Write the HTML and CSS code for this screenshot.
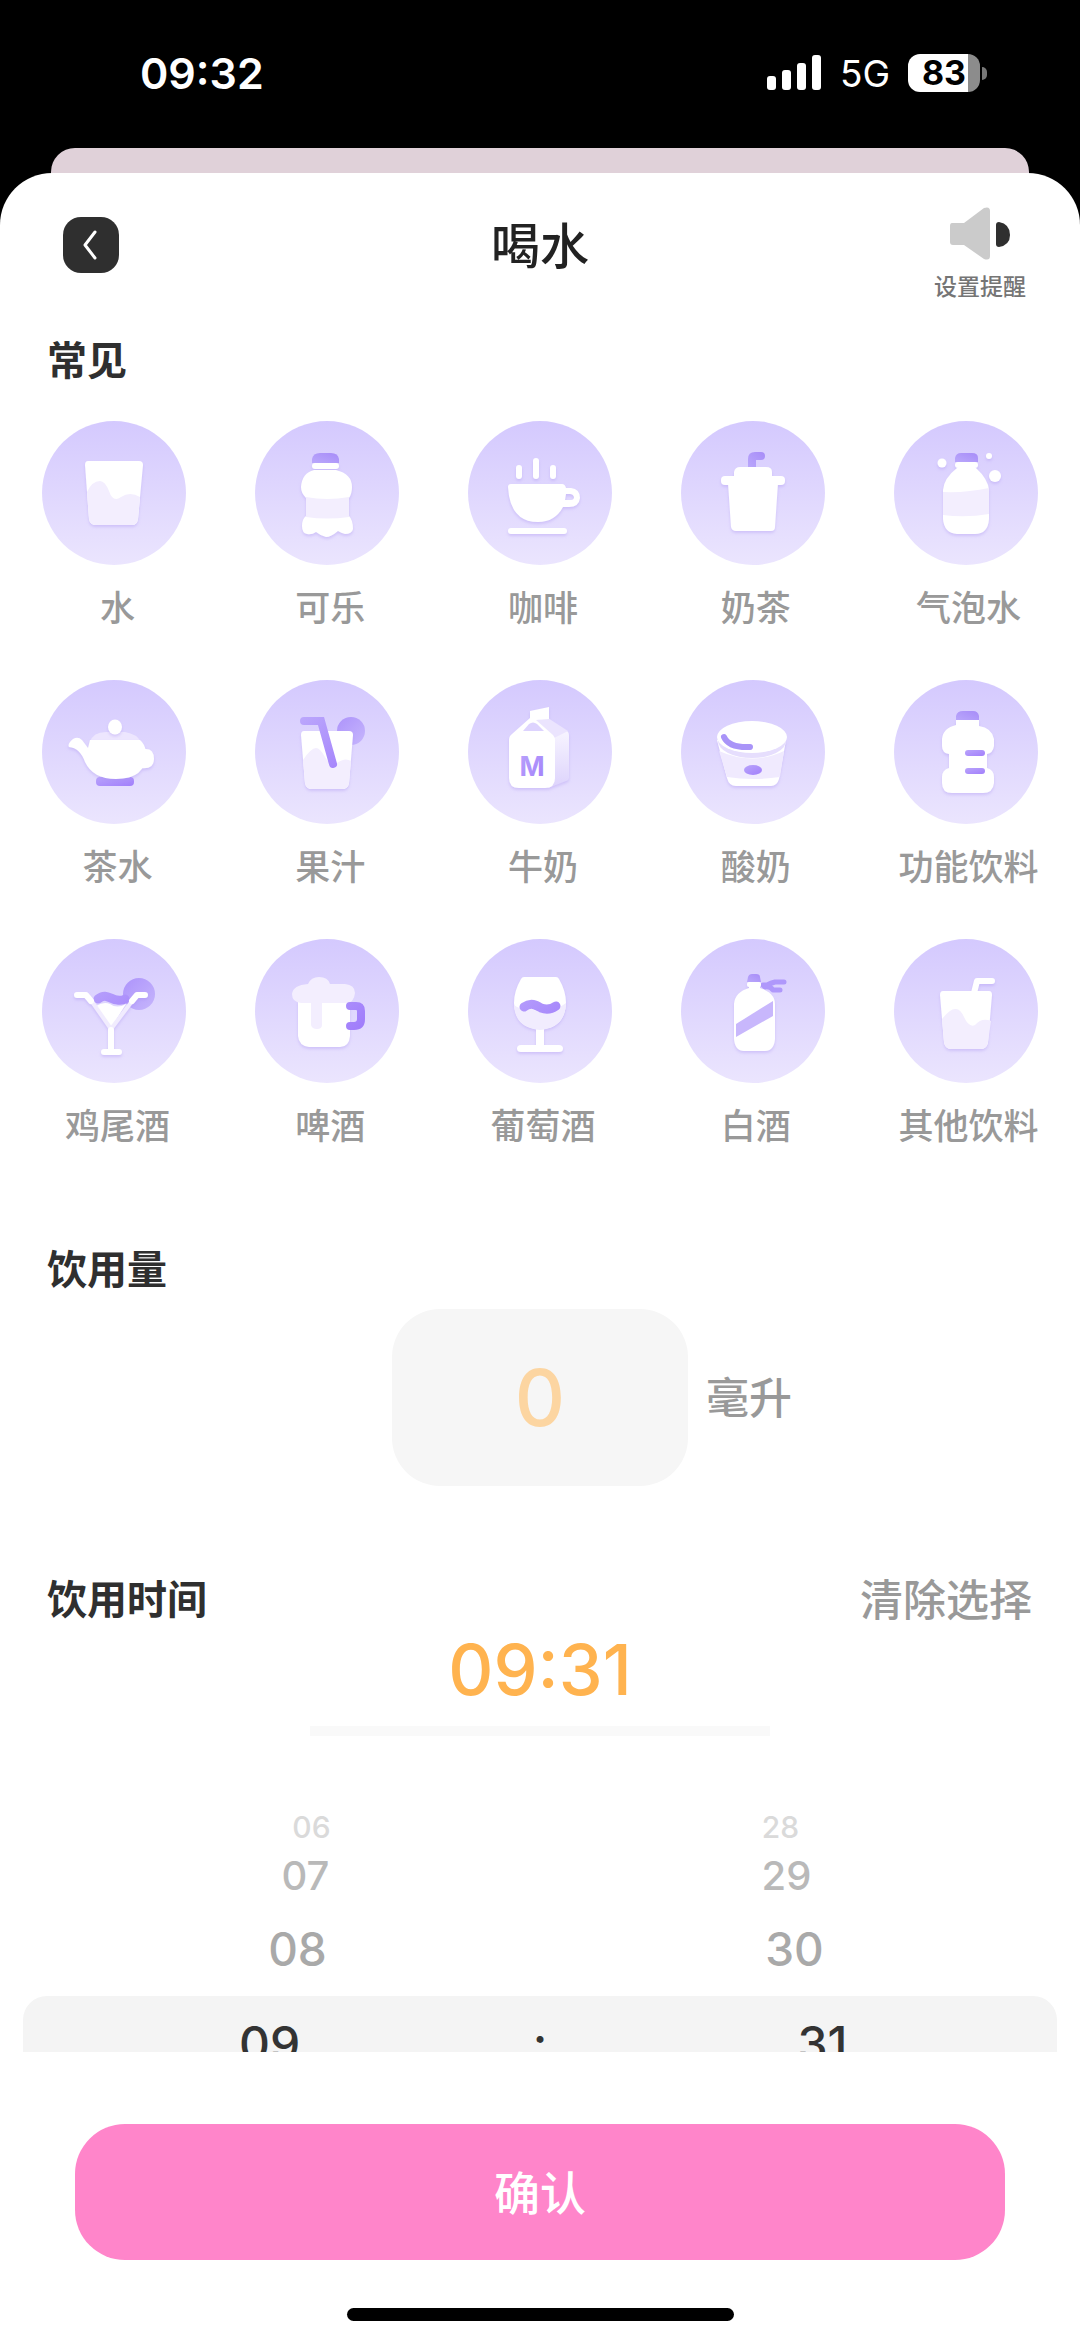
FILE: index.html
```html
<!DOCTYPE html>
<html lang="zh-CN">
<head>
<meta charset="utf-8">
<meta name="viewport" content="width=device-width, initial-scale=1">
<title>喝水</title>
<link rel="stylesheet" href="styles.css">
</head>
<body>
<svg class="defs" width="0" height="0" aria-hidden="true">
  <defs>
    <linearGradient id="accent" x1="0" y1="0" x2="1" y2="1"><stop offset="0" stop-color="#b9a4fb"/><stop offset="1" stop-color="#a27ffb"/></linearGradient>
    <linearGradient id="capfill" x1="1" y1="0" x2="0" y2="1"><stop offset="0" stop-color="#a78cf8"/><stop offset="1" stop-color="#baa8fb"/></linearGradient>
    <linearGradient id="accentline" gradientUnits="userSpaceOnUse" x1="40" y1="35" x2="100" y2="100"><stop offset="0" stop-color="#bdaafc"/><stop offset="1" stop-color="#9f7bfb"/></linearGradient>
    <linearGradient id="slice" x1="0" y1="0" x2="1" y2="1"><stop offset="0" stop-color="#ad93fb"/><stop offset="1" stop-color="#c6b6fc"/></linearGradient>
    <linearGradient id="side" x1="0" y1="0" x2="0" y2="1"><stop offset="0" stop-color="#f7f4ff"/><stop offset="1" stop-color="#ddd3fc"/></linearGradient>
    <filter id="shade" x="-20%" y="-20%" width="140%" height="150%"><feDropShadow dx="0" dy="2" stdDeviation="1.5" flood-color="#a58ff0" flood-opacity=".35"/></filter>
  </defs>
</svg>

<div class="status">
  <time class="status-time">09:32</time>
  <div class="status-right">
    <svg width="55" height="36" viewBox="0 0 55 36" fill="#fff" aria-hidden="true"><rect y="21" width="9" height="14" rx="3"/><rect x="15" y="15" width="9" height="20" rx="3"/><rect x="30" y="8" width="9" height="27" rx="3"/><rect x="45" y="0" width="9" height="35" rx="3"/></svg>
    <span class="network">5G</span>
    <span class="battery"><span class="battery-body">83</span><span class="battery-tip"></span></span>
  </div>
</div>
<div class="behind"></div>

<div class="sheet">
  <header class="header">
    <button class="back" type="button" aria-label="返回">
      <svg width="56" height="56" viewBox="0 0 56 56" fill="none" stroke="#fff" stroke-width="3" stroke-linecap="round" stroke-linejoin="round" aria-hidden="true"><path d="M32 15 L22 28 L32 41"/></svg>
    </button>
    <h1 class="title">喝水</h1>
    <button class="remind" type="button">
      <svg width="62" height="54" viewBox="0 0 62 54" aria-hidden="true"><path fill="#cbcbcb" d="M3 16H15L35 1Q41-1 41 4V49Q41 54 35 52L15 38H4Q1 38 1 35V19Q1 16 3 16Z"/><path fill="#2f2f2f" d="M47 18Q47 15 50 15Q61 17 61 28Q61 38 50 40Q47 40 47 37Z"/></svg>
      <span>设置提醒</span>
    </button>
  </header>

  <main class="content">
    <h2 class="section-title">常见</h2>
    <div class="drinks">
      <button class="drink" type="button">
        <svg class="drink-icon" viewBox="0 0 144 144" aria-hidden="true"><g filter="url(#shade)"><path fill="#fff" d="M46 40H97Q101 40 101 44L96 98Q95 104 90 104H54Q48 104 47 98L43 44Q43 40 46 40Z"/></g><path fill="#f3eefe" d="M45 71Q50 60 58 60Q63 60 67 70Q71 82 79 76Q88 70 98 76L96 98Q95 104 90 104H54Q48 104 47 98Z"/></svg>
        <span>水</span>
      </button>
      <button class="drink" type="button">
        <svg class="drink-icon" viewBox="0 0 144 144" aria-hidden="true"><path fill="url(#capfill)" d="M57 42V38Q58 32 65 32H76Q83 32 84 38V42Z"/><g filter="url(#shade)"><rect x="57" y="42" width="27" height="6" rx="3" fill="#fff"/><path fill="#fff" d="M59 49H81Q97 53 97 66Q97 73 94 77V95Q98 99 98 108Q97 113 90 113Q86 112 83 110Q76 116 71 116Q66 115 61 111Q57 114 52 113Q47 112 47 105Q47 98 51 95V77Q46 72 46 66Q47 52 59 49Z"/></g><path fill="#f3eefe" d="M51 76Q72 80 94 76V96Q72 99 51 96Z"/></svg>
        <span>可乐</span>
      </button>
      <button class="drink" type="button">
        <svg class="drink-icon" viewBox="0 0 144 144" aria-hidden="true"><g fill="#fff" filter="url(#shade)"><rect x="48" y="44" width="6" height="14" rx="3"/><rect x="65" y="37" width="6" height="21" rx="3"/><rect x="82" y="44" width="6" height="14" rx="3"/><path fill-rule="evenodd" d="M43 63H94Q97 63 98 67H103Q112 68 112 77Q111 86 101 86H95Q87 101 70 101Q42 101 40 66Q40 63 43 63ZM98 73L97 79H103Q106 79 106 76Q105 73 102 73Z"/><rect x="40" y="107" width="59" height="6" rx="3"/></g></svg>
        <span>咖啡</span>
      </button>
      <button class="drink" type="button">
        <svg class="drink-icon" viewBox="0 0 144 144" aria-hidden="true"><path fill="url(#capfill)" d="M67 47V38Q67 31 74 31H80Q84 31 84 35Q84 39 80 39H75V47Z"/><g fill="#fff" filter="url(#shade)"><path d="M47 62H97L94 106Q94 110 90 110H55Q51 110 50 106Z"/><path d="M53 58V51Q54 46 59 46H85Q91 46 91 51V58Z"/><rect x="40" y="55" width="64" height="9" rx="4"/></g></svg>
        <span>奶茶</span>
      </button>
      <button class="drink" type="button">
        <svg class="drink-icon" viewBox="0 0 144 144" aria-hidden="true"><path fill="url(#capfill)" d="M61 41V37Q62 32 67 32H78Q84 32 84 37V41Z"/><g fill="#fff" filter="url(#shade)"><rect x="61" y="41" width="23" height="6" rx="3"/><path d="M63 47H82Q94 58 95 69V98Q94 113 81 113H63Q50 112 49 98V69Q50 57 63 47Z"/><circle cx="48" cy="42" r="4.500"/><circle cx="95" cy="35" r="3"/><circle cx="101" cy="55" r="6"/></g><path fill="#f3eefe" d="M49 71Q72 72 95 67V93Q72 97 49 94Z"/></svg>
        <span>气泡水</span>
      </button>

      <button class="drink" type="button">
        <svg class="drink-icon" viewBox="0 0 144 144" aria-hidden="true"><rect x="54" y="97" width="38" height="9" rx="4" fill="url(#accent)"/><path fill="#ede6fe" d="M48 62Q51 52 64 52H83Q95 54 99 62Z"/><g fill="#fff" filter="url(#shade)"><ellipse cx="73" cy="47" rx="7" ry="7.500"/><path d="M98 70Q112 66 112 79Q112 90 98 88Z"/><path d="M48 60H98Q103 64 104 72Q105 99 74 99Q51 99 43 82Q38 68 27 67Q25 64 31 59Q36 56 40 60L46 68Z"/></g></svg>
        <span>茶水</span>
      </button>
      <button class="drink" type="button">
        <svg class="drink-icon" viewBox="0 0 144 144" aria-hidden="true"><circle cx="96" cy="51" r="14" fill="url(#slice)"/><g filter="url(#shade)"><path fill="#fff" d="M49 51H94Q98 51 98 55L94 103Q93 109 87 109H57Q51 109 50 103L46 55Q46 51 49 51Z"/></g><path fill="#f3eefe" d="M48 80Q56 68 61 68Q65 68 70 77Q76 87 82 83Q90 77 96 81L94 103Q93 109 87 109H57Q51 109 50 103Z"/><path fill="none" stroke="url(#accentline)" stroke-width="8" stroke-linecap="round" d="M49 41H66L78 84"/></svg>
        <span>果汁</span>
      </button>
      <button class="drink" type="button">
        <svg class="drink-icon" viewBox="0 0 144 144" aria-hidden="true"><g filter="url(#shade)"><path fill="url(#side)" d="M82 54L99 51Q101 52 101 56V97Q101 100 98 101L80 108Z"/><path fill="#ebe4fe" d="M65 40L80 38L100 51L86 58Z"/><path fill="#fff" d="M62 31L81 27V39L68 40L85 55Q87 57 87 61V98Q87 108 77 108H51Q41 108 41 98V60Q41 56 44 54L62 38Z"/></g><path fill="#ddd3fe" d="M55 51L61 44Q65 41 69 44L76 51Z"/><text x="64" y="96" text-anchor="middle" class="carton-mark">M</text></svg>
        <span>牛奶</span>
      </button>
      <button class="drink" type="button">
        <svg class="drink-icon" viewBox="0 0 144 144" aria-hidden="true"><g filter="url(#shade)"><path fill="#fff" d="M36 60L46 98Q48 106 55 106H90Q96 106 98 99L105 60Z"/></g><path fill="#f0eafe" d="M38 71Q72 86 103 71L99 97Q72 101 46 97Z"/><ellipse cx="71" cy="61" rx="34" ry="17" fill="#e6defd"/><ellipse cx="71" cy="57" rx="35" ry="16" fill="#fff"/><path fill="none" stroke="#a994f8" stroke-width="6" stroke-linecap="round" d="M43 57Q48 68 69 67"/><ellipse cx="72" cy="90" rx="9" ry="5" fill="url(#accent)"/></svg>
        <span>酸奶</span>
      </button>
      <button class="drink" type="button">
        <svg class="drink-icon" viewBox="0 0 144 144" aria-hidden="true"><path fill="url(#capfill)" d="M62 41V36Q63 31 69 31H79Q84 31 85 36V41Z"/><g fill="#fff" filter="url(#shade)"><path d="M62 40H85V46Q98 48 100 59V66Q99 73 93 74V88Q100 90 100 97V103Q99 113 89 113H58Q48 113 48 103V97Q48 90 55 88V74Q48 73 48 66V59Q49 48 62 45Z"/></g><rect x="71" y="70" width="20" height="6" rx="3" fill="url(#accent)"/><rect x="71" y="88" width="20" height="6" rx="3" fill="url(#accent)"/></svg>
        <span>功能饮料</span>
      </button>

      <button class="drink" type="button">
        <svg class="drink-icon" viewBox="0 0 144 144" aria-hidden="true"><circle cx="97" cy="55" r="16" fill="url(#slice)"/><path fill="none" stroke="url(#accentline)" stroke-width="9" stroke-linecap="round" d="M56 60C64 53 69 61 75 61Q80 62 83 60"/><g filter="url(#shade)"><path fill="#fff" d="M54 67Q62 62 68 65Q75 70 84 65L69 89Z"/><path fill="none" stroke="#f1ecfe" stroke-width="4" d="M46 57L69 90L94 57"/><path fill="none" stroke="#fff" stroke-width="6" stroke-linecap="round" stroke-linejoin="round" d="M35 56H44L49 62M90 62L95 56H103M69 91V111M62 113H77"/></g></svg>
        <span>鸡尾酒</span>
      </button>
      <button class="drink" type="button">
        <svg class="drink-icon" viewBox="0 0 144 144" aria-hidden="true"><g filter="url(#shade)"><path fill="#fff" d="M43 62H95V97Q94 108 85 108H54Q44 107 43 97Z"/></g><path fill="#f3eefe" d="M53 45Q56 38 64 38Q73 38 75 45H90Q100 46 100 54Q99 64 91 64H67V86Q67 90 62 90Q57 90 56 86V64H46Q37 63 37 55Q38 46 53 45Z"/><path fill="none" stroke="url(#accentline)" stroke-width="8" stroke-linecap="round" stroke-linejoin="round" d="M95 67H101Q106 67 106 72V80Q106 87 99 87H95"/></svg>
        <span>啤酒</span>
      </button>
      <button class="drink" type="button">
        <svg class="drink-icon" viewBox="0 0 144 144" aria-hidden="true"><g filter="url(#shade)"><path fill="#fff" d="M56 38H88Q90 38 91 40Q98 52 98 64Q97 87 76 90V106H91Q95 106 95 109.500Q95 113 91 113H53Q49 113 49 109.500Q49 106 53 106H68V90Q47 87 46 64Q46 52 53 40Q54 38 56 38Z"/></g><path fill="#f1ecfe" d="M46 66Q54 72 63 69Q77 80 98 64Q97 89 72 91Q47 89 46 66Z"/><path fill="none" stroke="url(#accentline)" stroke-width="9" stroke-linecap="round" d="M56 68C63 63 68 66 73 69Q81 72 88 67"/></svg>
        <span>葡萄酒</span>
      </button>
      <button class="drink" type="button">
        <svg class="drink-icon" viewBox="0 0 144 144" aria-hidden="true"><path fill="none" stroke="#af98fb" stroke-width="5" stroke-linecap="round" stroke-linejoin="round" d="M103 43H94Q90 44 86 46L82 46L84 48Q89 47 92 51H99"/><path fill="url(#capfill)" d="M66 43L67 38Q68 35 71 35H75Q79 35 79 38L80 43Z"/><g fill="#fff" filter="url(#shade)"><rect x="66" y="43" width="14" height="5" rx="2"/><path d="M68 47H79V49Q94 54 94 65V100Q93 112 84 112H63Q54 112 53 100V65Q54 53 68 49Z"/></g><path fill="#c8b7fc" d="M55 85L92 62V77L55 98Z"/></svg>
        <span>白酒</span>
      </button>
      <button class="drink" type="button">
        <svg class="drink-icon" viewBox="0 0 144 144" aria-hidden="true"><g filter="url(#shade)"><path fill="none" stroke="#fff" stroke-width="6" stroke-linecap="round" stroke-linejoin="round" d="M80 54L83 42H98"/><path fill="#fff" d="M49 52H95Q98 52 98 56L94 103Q93 110 87 110H57Q51 110 50 103L46 56Q46 52 49 52Z"/></g><path fill="#f3eefe" d="M48 80Q56 70 61 70Q66 69 70 78Q75 89 81 86Q88 78 97 82L94 103Q93 110 87 110H57Q51 110 50 103Z"/></svg>
        <span>其他饮料</span>
      </button>
    </div>

    <h2 class="section-title amount-title"><label for="amount">饮用量</label></h2>
    <div class="amount">
      <input id="amount" class="amount-input" type="text" inputmode="numeric" placeholder="0">
      <span class="unit">毫升</span>
    </div>

    <div class="time-head">
      <h2 class="section-title">饮用时间</h2>
      <button class="clear" type="button">清除选择</button>
    </div>
    <div class="chosen"><time class="chosen-time">09:31</time></div>

    <div class="wheel">
      <div class="wheel-row far"><span class="hour">06</span><span class="minute">28</span></div>
      <div class="wheel-row mid"><span class="hour">07</span><span class="minute">29</span></div>
      <div class="wheel-row near"><span class="hour">08</span><span class="minute">30</span></div>
      <div class="wheel-row current"><span class="hour">09</span><span class="colon">:</span><span class="minute">31</span></div>
    </div>
  </main>

  <footer class="footer">
    <button class="confirm" type="button">确认</button>
    <div class="home-bar"></div>
  </footer>
</div>
</body>
</html>
```
FILE: styles.css
```css
* { box-sizing: border-box; }

body {
  margin: 0;
  height: 100vh;
  display: flex;
  flex-direction: column;
  background: #000;
  color: #2f2f2f;
  font-family: Inter, "Noto Sans CJK SC", sans-serif;
}

button {
  margin: 0;
  padding: 0;
  border: 0;
  background: none;
  color: inherit;
  font: inherit;
  cursor: pointer;
}

h1, h2 { margin: 0; }
svg { display: block; }
.defs { position: absolute; }

/* Status bar */
.status {
  flex: none;
  height: 148px;
  padding: 0 93px 2px 140px;
  display: flex;
  align-items: center;
  justify-content: space-between;
  color: #fff;
}
.status-time { font-size: 43px; font-weight: 600; }
.status-right { display: flex; align-items: center; gap: 18px; }
.network { font-size: 37px; }
.battery { display: flex; align-items: center; gap: 2px; }
.battery-body {
  width: 72px;
  height: 38px;
  border-radius: 12px;
  background: linear-gradient(90deg, #fff 60px, #8c8c8c 60px);
  color: #000;
  font-size: 34px;
  font-weight: 700;
  line-height: 38px;
  text-align: center;
}
.battery-tip { width: 5px; height: 13px; border-radius: 0 5px 5px 0; background: #777; }

/* Page behind the sheet */
.behind {
  flex: none;
  height: 25px;
  margin: 0 51px;
  border-radius: 24px 24px 0 0;
  background: #e0d1d9;
}

.sheet {
  flex: 1;
  min-height: 0;
  display: flex;
  flex-direction: column;
  border-radius: 52px 52px 0 0;
  background: #fff;
}

.header {
  flex: none;
  display: grid;
  grid-template-columns: 1fr auto 1fr;
  align-items: start;
  padding: 34px 54px 0;
}
.back {
  width: 56px;
  height: 56px;
  margin: 10px 0 0 9px;
  border-radius: 18px;
  background: #2f2f2f;
}
.title {
  margin-top: 12px;
  color: #222;
  font-size: 49px;
  font-weight: 500;
  line-height: 56px;
}
.remind {
  justify-self: end;
  display: flex;
  flex-direction: column;
  align-items: center;
  gap: 10px;
  color: #757575;
  font-size: 23px;
  font-weight: 500;
  line-height: 32px;
}

/* Scrolling part of the sheet */
.content {
  flex: 1;
  min-height: 0;
  padding-top: 28px;
  overflow-y: auto;
  scrollbar-width: none;
}
.section-title {
  padding-left: 47px;
  font-size: 40px;
  font-weight: 600;
  line-height: 60px;
}

.drinks {
  display: grid;
  grid-template-columns: repeat(5, 1fr);
  row-gap: 50px;
  margin-top: 30px;
  padding: 0 8px;
}
.drink {
  display: flex;
  flex-direction: column;
  align-items: center;
  gap: 21px;
  color: #999;
  font-size: 35px;
  font-weight: 500;
  line-height: 44px;
}
.drink span { padding-left: 6px; }
.drink-icon {
  width: 144px;
  height: 144px;
  border-radius: 50%;
  background: linear-gradient(#d4c9fe, #ebe5fe);
}
.carton-mark {
  fill: url(#accent);
  font-size: 27px;
  font-weight: 700;
}

.amount-title { margin-top: 92px; }
.amount {
  display: grid;
  grid-template-columns: 1fr 296px 1fr;
  align-items: center;
  column-gap: 18px;
  margin-top: 9px;
}
.amount-input {
  grid-column: 2;
  width: 100%;
  height: 177px;
  padding: 0;
  border: 0;
  border-radius: 48px;
  background: #f6f6f6;
  color: #ffb34f;
  font: 500 78px Inter, sans-serif;
  text-align: center;
}
.amount-input::placeholder { color: #fcd5a1; opacity: 1; }
.unit { color: #999; font-size: 43px; font-weight: 500; line-height: 60px; }

.time-head {
  display: flex;
  justify-content: space-between;
  margin-top: 84px;
  padding-right: 48px;
}
.clear { color: #999; font-size: 43px; font-weight: 500; line-height: 60px; }

.chosen {
  width: 460px;
  margin: 0 auto;
  padding-bottom: 16px;
  border-bottom: 10px solid #f9f9f9;
  text-align: center;
}
.chosen-time {
  display: block;
  color: #ffb34f;
  font-size: 70px;
  font-weight: 500;
  line-height: 80px;
}

/* Hour and minute wheel */
.wheel { margin: 70px 23px 0; }
.wheel-row {
  --turn: 0px;
  display: grid;
  grid-template-columns: 1fr 48px 1fr;
  align-items: center;
  font-weight: 500;
  text-align: center;
}
.hour { grid-column: 1; padding-left: var(--turn); }
.minute { grid-column: 3; padding-left: 24px; padding-right: var(--turn); }
.far { --turn: 84px; height: 42px; color: #dadada; font-size: 30px; }
.mid { --turn: 72px; height: 54px; color: #b9b9b9; font-size: 40px; }
.near { --turn: 56px; height: 94px; color: #a9a9a9; font-size: 46px; }
.current {
  height: 95px;
  border-radius: 24px;
  background: #f4f4f4;
  color: #333;
  font-size: 48px;
}

.footer {
  flex: none;
  padding: 72px 75px 20px;
  background: #fff;
}
.confirm {
  display: block;
  width: 100%;
  height: 136px;
  padding-bottom: 5px;
  border-radius: 50px;
  background: #ff85ca;
  color: #fff;
  font-size: 46px;
  font-weight: 500;
}
.home-bar {
  width: 387px;
  height: 13px;
  margin: 48px auto 0;
  border-radius: 7px;
  background: #000;
}
```
